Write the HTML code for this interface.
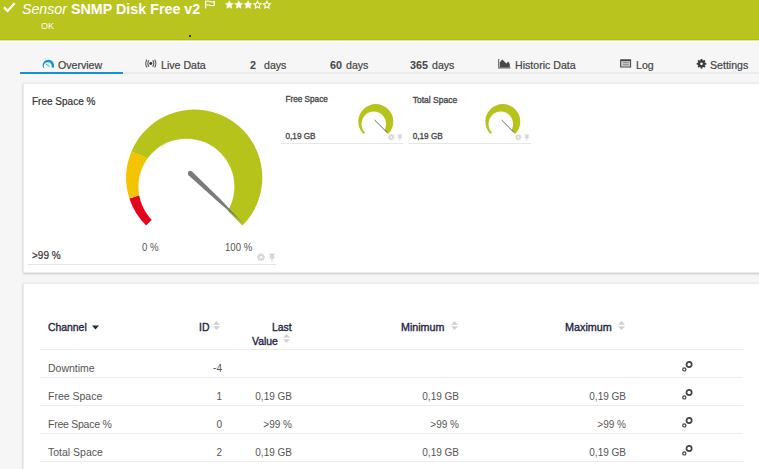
<!DOCTYPE html>
<html><head><meta charset="utf-8">
<style>
*{margin:0;padding:0;box-sizing:border-box}
html,body{width:759px;height:469px;overflow:hidden;background:#f6f6f6;font-family:"Liberation Sans",sans-serif;position:relative}
.a{position:absolute;white-space:nowrap;line-height:1}
#hdr{position:absolute;left:0;top:0;width:759px;height:40px;background:#bac41e;border-bottom:1px solid #b2bc14}
#hline{position:absolute;left:0;top:40px;width:759px;height:2px;background:#fbfbfb;border-top:1px solid #dfe3a8}
.tab{color:#444;font-size:10.6px;-webkit-text-stroke:0.2px #444}
.tabb{color:#444;font-weight:bold;font-size:10.8px}
#tabline{position:absolute;left:20px;top:72px;width:739px;height:2px;background:#ececec}
#tabsel{position:absolute;left:20px;top:72px;width:103px;height:2px;background:#1393d4}
.card{position:absolute;background:#fff;border:1px solid #ececec;box-shadow:0 1px 2px rgba(0,0,0,.16),0 0 2px rgba(0,0,0,.08)}
.sep{position:absolute;height:1px;background:#e6e6e6}
.th{color:#1f2440;font-size:10.4px;-webkit-text-stroke:0.35px #1f2440}
.td{color:#555;font-size:10.5px}
</style></head><body>
<div id="hdr"></div>
<div id="hline"></div>
<!-- check -->
<svg class="a" style="left:0px;top:0px" width="20" height="16" viewBox="0 0 20 16"><path d="M3.9 7.3 L7.7 10.9 L14.6 3.3" fill="none" stroke="#fff" stroke-width="2.3"/></svg>
<div class="a" style="left:22px;top:1px;color:#fff;font-style:italic;font-size:14.2px;line-height:17px">Sensor</div>
<div class="a" style="left:71px;top:1px;color:#fff;font-weight:bold;font-size:14.3px;line-height:17px">SNMP Disk Free v2</div>
<!-- flag -->
<svg class="a" style="left:204px;top:0px" width="12" height="10" viewBox="0 0 12 10"><path d="M1.6 0.6 V8.5" stroke="#fff" stroke-width="1.3" fill="none"/><path d="M1.6 1.5 Q4 0.5 6 1.5 Q8.2 2.5 10.3 1.5 V5.2 Q8.2 6.2 6 5.2 Q4 4.2 1.6 5.3" fill="none" stroke="#fff" stroke-width="1.1"/></svg>
<!-- stars -->
<svg class="a" style="left:224px;top:0px" width="50" height="10" viewBox="0 0 50 10"><polygon points="5.30,0.60 6.56,3.16 9.39,3.57 7.34,5.56 7.83,8.38 5.30,7.05 2.77,8.38 3.26,5.56 1.21,3.57 4.04,3.16" fill="#fff" stroke="#fff" stroke-width="0.3" stroke-linejoin="round"/><polygon points="14.70,0.60 15.96,3.16 18.79,3.57 16.74,5.56 17.23,8.38 14.70,7.05 12.17,8.38 12.66,5.56 10.61,3.57 13.44,3.16" fill="#fff" stroke="#fff" stroke-width="0.3" stroke-linejoin="round"/><polygon points="24.10,0.60 25.36,3.16 28.19,3.57 26.14,5.56 26.63,8.38 24.10,7.05 21.57,8.38 22.06,5.56 20.01,3.57 22.84,3.16" fill="#fff" stroke="#fff" stroke-width="0.3" stroke-linejoin="round"/><polygon points="33.50,1.30 34.54,3.56 37.02,3.86 35.19,5.55 35.67,7.99 33.50,6.78 31.33,7.99 31.81,5.55 29.98,3.86 32.46,3.56" fill="none" stroke="#fff" stroke-width="1.05"/><polygon points="42.90,1.30 43.94,3.56 46.42,3.86 44.59,5.55 45.07,7.99 42.90,6.78 40.73,7.99 41.21,5.55 39.38,3.86 41.86,3.56" fill="none" stroke="#fff" stroke-width="1.05"/></svg>
<div class="a" style="left:41px;top:21px;color:#fff;font-size:9px;line-height:10px;transform:scaleY(1.08);transform-origin:0 100%">OK</div>
<div class="a" style="left:188.5px;top:34.5px;width:2.4px;height:2.4px;border-radius:2px;background:#000"></div>

<!-- tabs -->
<div id="tabline"></div>
<div id="tabsel"></div>
<svg class="a" style="left:38px;top:55px" width="20" height="17" viewBox="38 55 20 17"><path d="M48.35 65.35 L43.27 67.94 A5.7 5.7 0 1 1 53.43 67.94 Z" fill="#1393d4"/><circle cx="47.75" cy="66.1" r="3.95" fill="#f6f6f6"/><path d="M45.7 63.8 L49.7 66.7" stroke="#3aa5dc" stroke-width="1"/></svg>
<div class="a tab" style="left:58px;top:60px">Overview</div>
<svg class="a" style="left:140px;top:54px" width="22" height="18" viewBox="140 54 22 18"><circle cx="150.8" cy="63.5" r="1.45" fill="#333"/><path d="M148.9 60.3 A5.9 5.9 0 0 0 148.9 66.7 M152.7 60.3 A5.9 5.9 0 0 1 152.7 66.7 M147 59.6 A6.9 6.9 0 0 0 147 67.4 M154.6 59.6 A6.9 6.9 0 0 1 154.6 67.4" fill="none" stroke="#555" stroke-width="1.1"/></svg>
<div class="a tab" style="left:161px;top:60px">Live Data</div>
<div class="a tabb" style="left:250px;top:60px">2</div>
<div class="a tab" style="left:264px;top:60px">days</div>
<div class="a tabb" style="left:330px;top:60px">60</div>
<div class="a tab" style="left:346px;top:60px">days</div>
<div class="a tabb" style="left:410px;top:60px">365</div>
<div class="a tab" style="left:432px;top:60px">days</div>
<svg class="a" style="left:490px;top:54px" width="30" height="18" viewBox="490 54 30 18"><path d="M498.1 58.9 H499.2 V67.2 H510.5 V68.6 H498.1 Z" fill="#666"/><path d="M499.8 67.2 V62.3 L502.3 59.6 L506.4 63.4 L508.2 61.6 L509.8 64 V67.2 Z" fill="#484848"/></svg>
<div class="a tab" style="left:515px;top:60px">Historic Data</div>
<svg class="a" style="left:614px;top:54px" width="26" height="18" viewBox="614 54 26 18"><rect x="620.1" y="59.2" width="11" height="8.4" rx="0.6" fill="#444"/><rect x="621.1" y="61.1" width="9" height="5.5" fill="#c4c8ca"/><path d="M623 62.6 H628.6 M623 64.6 H628.6" stroke="#8a8a8a" stroke-width="0.9"/></svg>
<div class="a tab" style="left:636px;top:60px">Log</div>
<svg class="a" style="left:690px;top:54px" width="26" height="18" viewBox="690 54 26 18"><circle cx="701.5" cy="63.8" r="3.5" fill="#3a3a3a"/><rect x="700.55" y="59.0" width="1.9" height="9.6" fill="#3a3a3a" transform="rotate(0.0 701.5 63.8)"/><rect x="700.55" y="59.0" width="1.9" height="9.6" fill="#3a3a3a" transform="rotate(45.0 701.5 63.8)"/><rect x="700.55" y="59.0" width="1.9" height="9.6" fill="#3a3a3a" transform="rotate(90.0 701.5 63.8)"/><rect x="700.55" y="59.0" width="1.9" height="9.6" fill="#3a3a3a" transform="rotate(135.0 701.5 63.8)"/><circle cx="701.5" cy="63.8" r="1.35" fill="#f4f4f4"/></svg>
<div class="a tab" style="left:710px;top:60px">Settings</div>

<!-- card 1 -->
<div class="card" style="left:23px;top:83px;width:760px;height:190px"></div>
<div class="a" style="left:32px;top:97px;color:#333;font-size:10px;-webkit-text-stroke:0.2px #333">Free Space %</div>
<svg class="a" style="left:110px;top:100px" width="170" height="140" viewBox="110 100 170 140">
  <path d="M194.3 177.5 L146.2 225.6 A68 68 0 0 1 129.4 198.5 Z" fill="#e3051b"/>
  <path d="M194.3 177.5 L129.4 198.5 A68 68 0 0 1 131.5 151.5 Z" fill="#f5c400"/>
  <path d="M194.3 177.5 L131.5 151.5 A68 68 0 1 1 242.4 225.6 Z" fill="#b6c31b"/>
  <circle cx="186.4" cy="186.7" r="48" fill="#fff"/>
  <path d="M192.08 171.41 L220.43 199.31 L242.90 222.90 L218.03 201.85 L188.52 175.19 A2.6 2.6 0 0 1 192.08 171.41 Z" fill="#7a7a7a"/>
</svg>
<div class="a" style="left:142px;top:242px;color:#555;font-size:9.6px;transform:scaleY(1.18);transform-origin:0 0">0 %</div>
<div class="a" style="left:225px;top:242px;color:#555;font-size:9.6px;transform:scaleY(1.18);transform-origin:0 0">100 %</div>
<div class="a" style="left:32px;top:251px;color:#333;font-size:10px;-webkit-text-stroke:0.2px #333">&gt;99 %</div>
<div class="sep" style="left:28px;top:264px;width:248px"></div>

<!-- small tiles -->
<div class="a" style="left:285.5px;top:96px;color:#4a4a4a;font-size:8.2px;-webkit-text-stroke:0.35px #4a4a4a">Free Space</div>
<div class="a" style="left:285.5px;top:133px;color:#444;font-size:8.2px;-webkit-text-stroke:0.3px #444">0,19 GB</div>
<div class="sep" style="left:281px;top:143px;width:122px"></div>
<div class="a" style="left:412.7px;top:96px;color:#4a4a4a;font-size:8.5px;-webkit-text-stroke:0.35px #4a4a4a">Total Space</div>
<div class="a" style="left:412.7px;top:133px;color:#444;font-size:8.2px;-webkit-text-stroke:0.3px #444">0,19 GB</div>
<div class="sep" style="left:408px;top:143px;width:123px"></div>

<!-- card 2 -->
<div class="card" style="left:23px;top:283px;width:760px;height:200px"></div>
<div class="a th" style="left:48px;top:323px">Channel</div>
<div class="a th" style="left:199px;top:323px">ID</div>
<div class="a th" style="left:272px;top:323px">Last</div>
<div class="a th" style="left:252px;top:337px">Value</div>
<div class="a th" style="left:401px;top:322px;font-size:10.7px">Minimum</div>
<div class="a th" style="left:565px;top:322px;font-size:10.8px">Maximum</div>
<div class="sep" style="background:#ececec;left:40px;top:349px;width:703px"></div>
<div class="sep" style="background:#ececec;left:40px;top:377px;width:703px"></div>
<div class="sep" style="background:#ececec;left:40px;top:405px;width:703px"></div>
<div class="sep" style="background:#ececec;left:40px;top:433px;width:703px"></div>
<div class="sep" style="background:#ececec;left:40px;top:461px;width:703px"></div>

<div class="a td" style="left:48px;top:363px">Downtime</div>
<div class="a td" style="left:48px;top:391px">Free Space</div>
<div class="a td" style="left:48px;top:419px;letter-spacing:-0.25px">Free Space %</div>
<div class="a td" style="left:48px;top:447px">Total Space</div>

<!-- small gauges -->
<svg class="a" style="left:355px;top:100px" width="45" height="40" viewBox="355 100 45 40">
  <path d="M375.8 121.5 L363.4 133.9 A17.5 17.5 0 1 1 388.2 133.9 Z" fill="#b6c31b"/>
  <circle cx="373.8" cy="123.9" r="12.3" fill="#fff"/>
  <path d="M374.6 120 L387.3 132.7" stroke="#666" stroke-width="1"/>
</svg>
<svg class="a" style="left:482px;top:100px" width="45" height="40" viewBox="355 100 45 40">
  <path d="M375.8 121.5 L363.4 133.9 A17.5 17.5 0 1 1 388.2 133.9 Z" fill="#b6c31b"/>
  <circle cx="373.8" cy="123.9" r="12.3" fill="#fff"/>
  <path d="M374.6 120 L387.3 132.7" stroke="#666" stroke-width="1"/>
</svg>
<!-- gear/pin icons -->
<svg class="a" style="left:257px;top:253px" width="20" height="9" viewBox="0 0 20 9"><g fill="#d6d6d6"><g transform="translate(4 4.2)"><circle r="2.8"/><rect x="-0.9" y="-4" width="1.8" height="8"/><rect x="-4" y="-0.9" width="8" height="1.8"/><rect x="-0.9" y="-4" width="1.8" height="8" transform="rotate(45)"/><rect x="-0.9" y="-4" width="1.8" height="8" transform="rotate(-45)"/></g><path d="M12 0.5 H18 V1.5 H17 V4 L18.2 5.5 H15.6 V8.5 H14.4 V5.5 H11.8 L13 4 V1.5 H12 Z"/></g><circle cx="4" cy="4.2" r="1.2" fill="#fff"/></svg>
<svg class="a" style="left:388px;top:134px" width="16" height="7" viewBox="0 0 20 9"><g fill="#d6d6d6"><g transform="translate(4 4.2)"><circle r="2.8"/><rect x="-0.9" y="-4" width="1.8" height="8"/><rect x="-4" y="-0.9" width="8" height="1.8"/><rect x="-0.9" y="-4" width="1.8" height="8" transform="rotate(45)"/><rect x="-0.9" y="-4" width="1.8" height="8" transform="rotate(-45)"/></g><path d="M12 0.5 H18 V1.5 H17 V4 L18.2 5.5 H15.6 V8.5 H14.4 V5.5 H11.8 L13 4 V1.5 H12 Z"/></g><circle cx="4" cy="4.2" r="1.2" fill="#fff"/></svg>
<svg class="a" style="left:515px;top:134px" width="16" height="7" viewBox="0 0 20 9"><g fill="#d6d6d6"><g transform="translate(4 4.2)"><circle r="2.8"/><rect x="-0.9" y="-4" width="1.8" height="8"/><rect x="-4" y="-0.9" width="8" height="1.8"/><rect x="-0.9" y="-4" width="1.8" height="8" transform="rotate(45)"/><rect x="-0.9" y="-4" width="1.8" height="8" transform="rotate(-45)"/></g><path d="M12 0.5 H18 V1.5 H17 V4 L18.2 5.5 H15.6 V8.5 H14.4 V5.5 H11.8 L13 4 V1.5 H12 Z"/></g><circle cx="4" cy="4.2" r="1.2" fill="#fff"/></svg>
<!-- table extras -->
<svg class="a" style="left:92px;top:325px" width="7" height="5" viewBox="0 0 7 5"><path d="M0 0.5 H7 L3.5 4.5 Z" fill="#1f2440"/></svg>
<svg class="a" style="left:213px;top:321px" width="7" height="9" viewBox="0 0 7 9"><path d="M0 3.7 L3.5 0 L7 3.7 Z M0 5.3 L3.5 9 L7 5.3 Z" fill="#d0d0d0"/></svg>
<svg class="a" style="left:283px;top:334px" width="7" height="9" viewBox="0 0 7 9"><path d="M0 3.7 L3.5 0 L7 3.7 Z M0 5.3 L3.5 9 L7 5.3 Z" fill="#d0d0d0"/></svg>
<svg class="a" style="left:451px;top:321px" width="7" height="9" viewBox="0 0 7 9"><path d="M0 3.7 L3.5 0 L7 3.7 Z M0 5.3 L3.5 9 L7 5.3 Z" fill="#d0d0d0"/></svg>
<svg class="a" style="left:618px;top:321px" width="7" height="9" viewBox="0 0 7 9"><path d="M0 3.7 L3.5 0 L7 3.7 Z M0 5.3 L3.5 9 L7 5.3 Z" fill="#d0d0d0"/></svg>
<div class="a td" style="left:22px;width:200px;text-align:right;font-size:10px;top:364px"><span style="position:relative;top:-1.5px">-</span>4</div>
<div class="a td" style="left:22px;width:200px;text-align:right;font-size:10px;top:392px">1</div>
<div class="a td" style="left:92px;width:200px;text-align:right;font-size:10px;top:392px">0,19 GB</div>
<div class="a td" style="left:259px;width:200px;text-align:right;font-size:10px;top:392px">0,19 GB</div>
<div class="a td" style="left:426px;width:200px;text-align:right;font-size:10px;top:392px">0,19 GB</div>
<div class="a td" style="left:22px;width:200px;text-align:right;font-size:10px;top:420px">0</div>
<div class="a td" style="left:92px;width:200px;text-align:right;font-size:10px;top:420px">&gt;99 %</div>
<div class="a td" style="left:259px;width:200px;text-align:right;font-size:10px;top:420px">&gt;99 %</div>
<div class="a td" style="left:426px;width:200px;text-align:right;font-size:10px;top:420px">&gt;99 %</div>
<div class="a td" style="left:22px;width:200px;text-align:right;font-size:10px;top:448px">2</div>
<div class="a td" style="left:92px;width:200px;text-align:right;font-size:10px;top:448px">0,19 GB</div>
<div class="a td" style="left:259px;width:200px;text-align:right;font-size:10px;top:448px">0,19 GB</div>
<div class="a td" style="left:426px;width:200px;text-align:right;font-size:10px;top:448px">0,19 GB</div>
<svg class="a" style="left:681px;top:360px" width="12" height="12" viewBox="0 0 12 12"><circle cx="8.1" cy="4.5" r="2.6" fill="none" stroke="#444" stroke-width="1.7"/><circle cx="3.3" cy="9.4" r="1.6" fill="none" stroke="#444" stroke-width="1.2"/></svg>
<svg class="a" style="left:681px;top:388px" width="12" height="12" viewBox="0 0 12 12"><circle cx="8.1" cy="4.5" r="2.6" fill="none" stroke="#444" stroke-width="1.7"/><circle cx="3.3" cy="9.4" r="1.6" fill="none" stroke="#444" stroke-width="1.2"/></svg>
<svg class="a" style="left:681px;top:416px" width="12" height="12" viewBox="0 0 12 12"><circle cx="8.1" cy="4.5" r="2.6" fill="none" stroke="#444" stroke-width="1.7"/><circle cx="3.3" cy="9.4" r="1.6" fill="none" stroke="#444" stroke-width="1.2"/></svg>
<svg class="a" style="left:681px;top:444px" width="12" height="12" viewBox="0 0 12 12"><circle cx="8.1" cy="4.5" r="2.6" fill="none" stroke="#444" stroke-width="1.7"/><circle cx="3.3" cy="9.4" r="1.6" fill="none" stroke="#444" stroke-width="1.2"/></svg>
</body></html>
